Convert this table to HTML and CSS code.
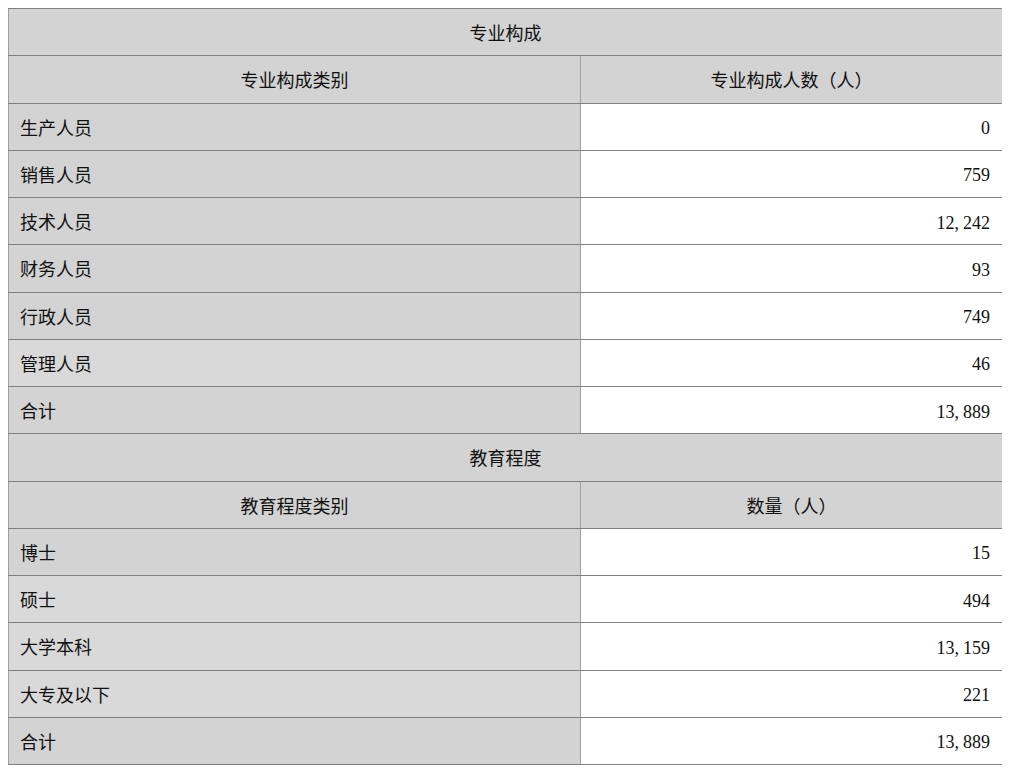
FILE: index.html
```html
<!DOCTYPE html>
<html lang="zh">
<head>
<meta charset="utf-8">
<link rel="stylesheet" href="styles.css">
</head>
<body>
<table class="tbl">
  <colgroup><col class="c1"><col class="c2"></colgroup>
  <tr><th colspan="2" class="hd">专业构成</th></tr>
  <tr><th class="hd">专业构成类别</th><th class="hd">专业构成人数（人）</th></tr>
  <tr><td class="lbl">生产人员</td><td class="num">0</td></tr>
  <tr><td class="lbl">销售人员</td><td class="num">759</td></tr>
  <tr><td class="lbl">技术人员</td><td class="num">12<span class="cm">,</span>242</td></tr>
  <tr><td class="lbl">财务人员</td><td class="num">93</td></tr>
  <tr><td class="lbl">行政人员</td><td class="num">749</td></tr>
  <tr><td class="lbl lt">管理人员</td><td class="num">46</td></tr>
  <tr><td class="lbl">合计</td><td class="num">13<span class="cm">,</span>889</td></tr>
  <tr><th colspan="2" class="hd">教育程度</th></tr>
  <tr><th class="hd">教育程度类别</th><th class="hd">数量（人）</th></tr>
  <tr><td class="lbl">博士</td><td class="num">15</td></tr>
  <tr><td class="lbl lt">硕士</td><td class="num">494</td></tr>
  <tr><td class="lbl lt">大学本科</td><td class="num">13<span class="cm">,</span>159</td></tr>
  <tr><td class="lbl lt">大专及以下</td><td class="num">221</td></tr>
  <tr><td class="lbl">合计</td><td class="num">13<span class="cm">,</span>889</td></tr>
</table>
</body>
</html>
```
FILE: styles.css
```css
html, body { background: #ffffff; }
body {
  margin: 8px;
  font-family: "Liberation Serif", "Noto Sans CJK SC", serif;
  font-size: 18px;
  color: #111111;
}
.tbl {
  width: 994px;
  border-collapse: collapse;
  table-layout: fixed;
  border: 1px solid #9a9a9a;
}
.c1 { width: 572px; }
.c2 { width: 422px; }
.tbl th, .tbl td {
  height: 47.25px;
  padding: 0 11px;
  border-top: 1px solid #808080;
  border-bottom: 1px solid #808080;
  border-left: 1px solid #a0a0a0;
  border-right: 1px solid #a0a0a0;
  box-sizing: border-box;
  line-height: 1;
}
.hd {
  background: #d3d3d3;
  font-weight: normal;
  text-align: center;
  font-family: "Noto Sans CJK SC", sans-serif;
}
.lbl {
  background: #d3d3d3;
  text-align: left;
  font-family: "Noto Sans CJK SC", sans-serif;
}
.lbl.lt { background: #d9d9d9; }
.tbl .num {
  background: #ffffff;
  text-align: right;
  padding: 3px 12px 0 11px;
}
.cm { margin-right: 4px; }
```
